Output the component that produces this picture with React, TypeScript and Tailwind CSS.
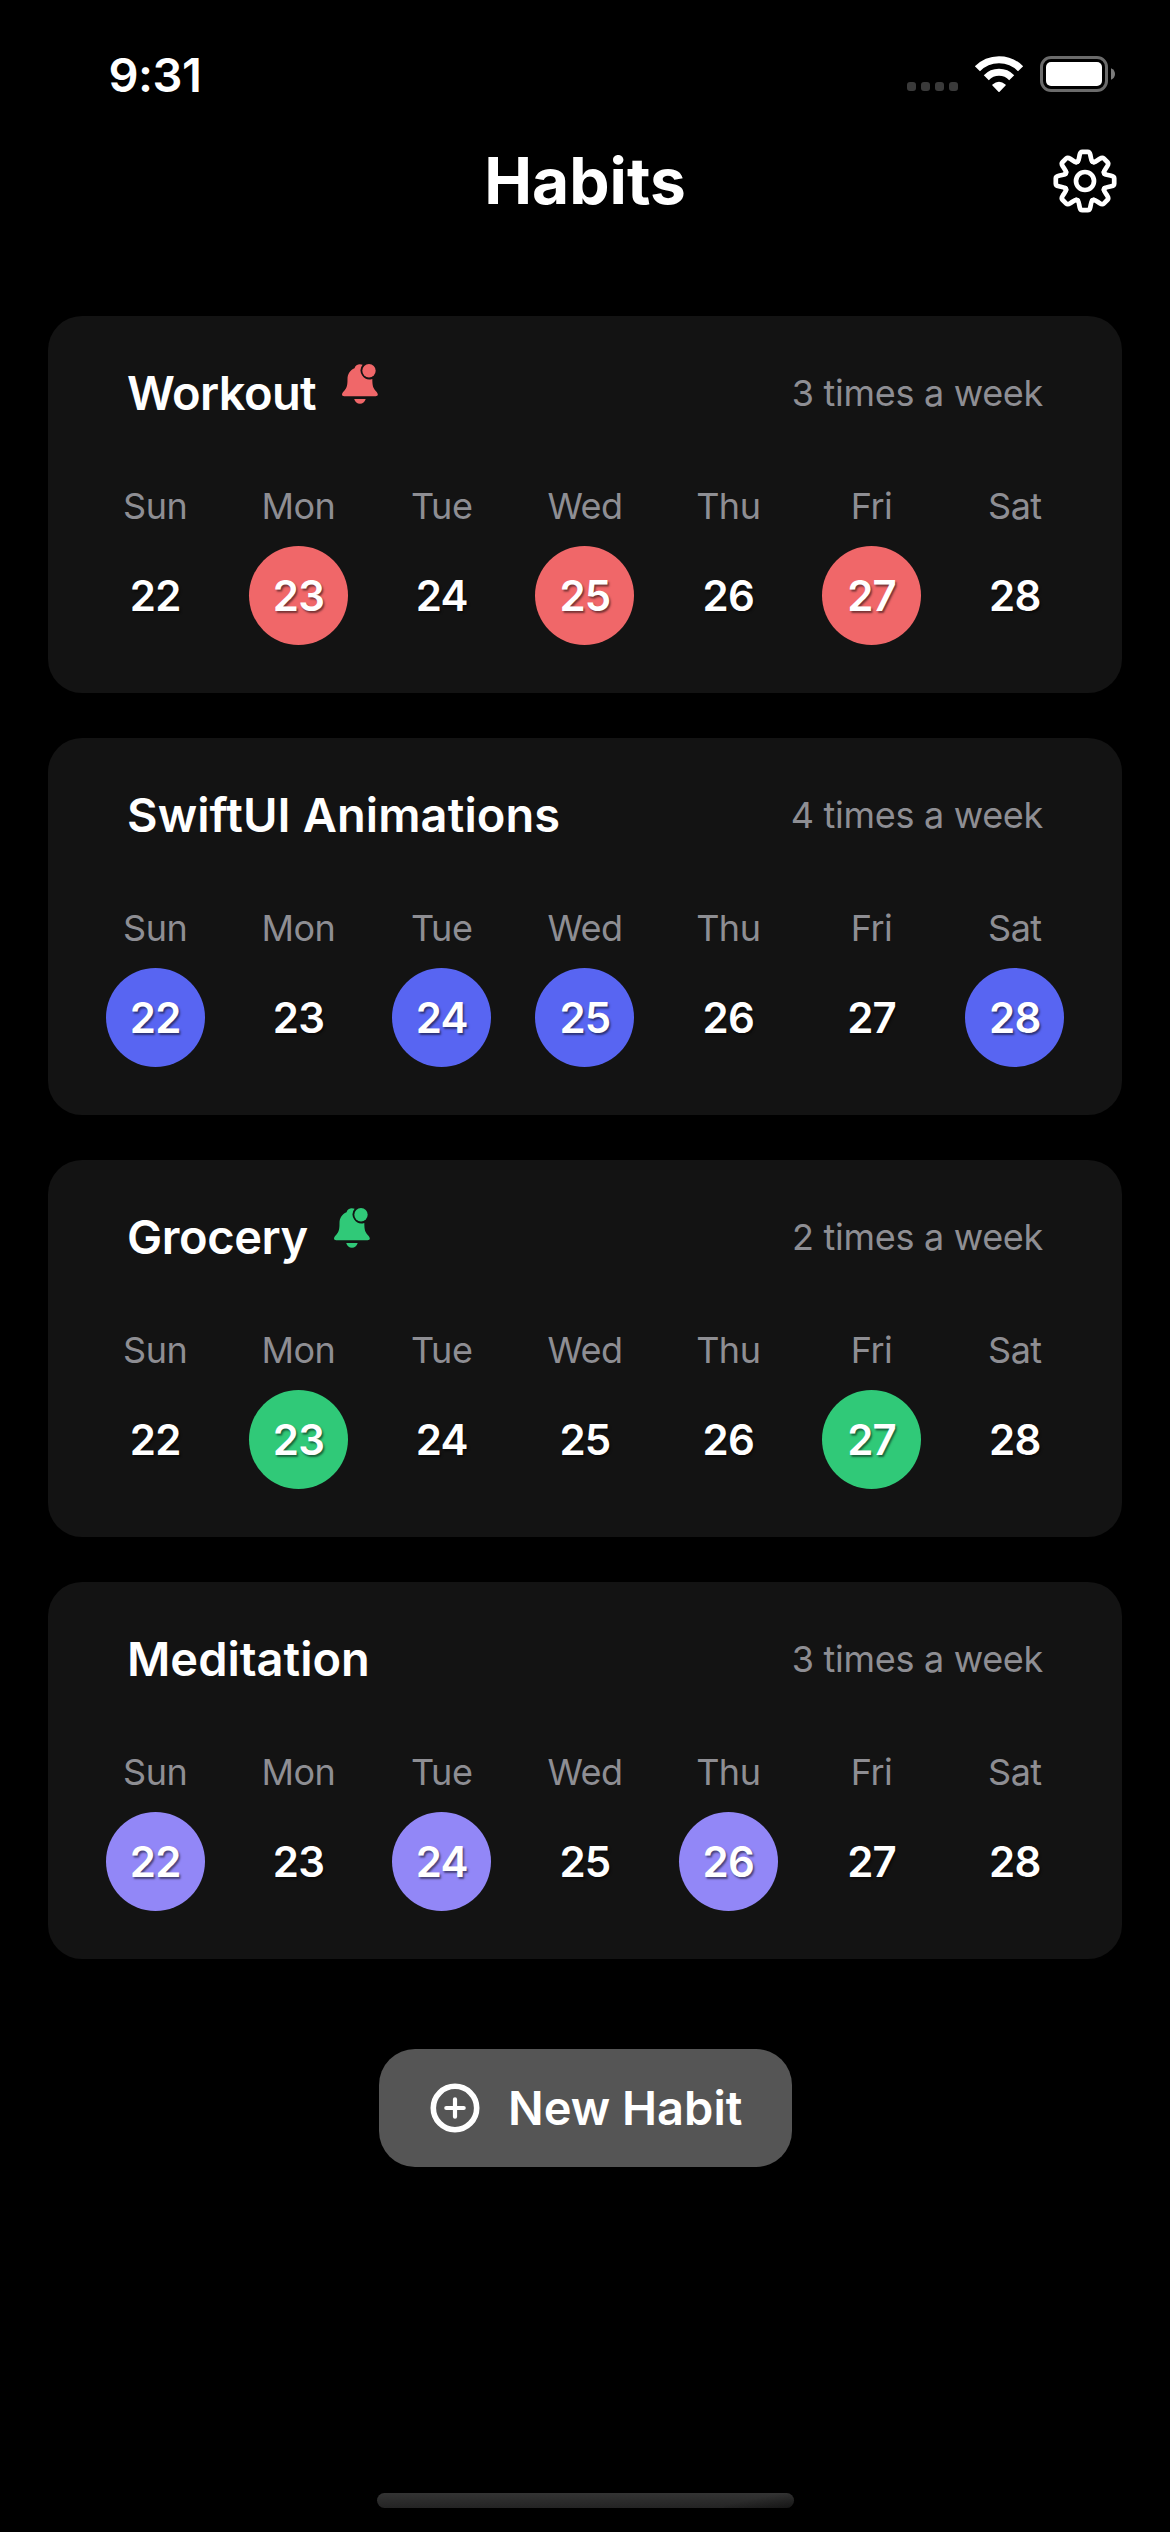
type Habit = {
  name: string;
  tracking: string;
  times: number;
  reminder: boolean;
  fill: string;
  text: string;
  active: number[];
};

const DAYS = [
  { label: "Sun", date: 22 },
  { label: "Mon", date: 23 },
  { label: "Tue", date: 24 },
  { label: "Wed", date: 25 },
  { label: "Thu", date: 26 },
  { label: "Fri", date: 27 },
  { label: "Sat", date: 28 },
];

const HABITS: Habit[] = [
  { name: "Workout", tracking: "tracking-[-0.6px]", times: 3, reminder: true, fill: "bg-[#f06769]", text: "text-[#f06769]", active: [23, 25, 27] },
  { name: "SwiftUI Animations", tracking: "tracking-[0.1px]", times: 4, reminder: false, fill: "bg-[#5865f2]", text: "text-[#5865f2]", active: [22, 24, 25, 28] },
  { name: "Grocery", tracking: "tracking-[-0.4px]", times: 2, reminder: true, fill: "bg-[#30c978]", text: "text-[#30c978]", active: [23, 27] },
  { name: "Meditation", tracking: "tracking-[0px]", times: 3, reminder: false, fill: "bg-[#9287f7]", text: "text-[#9287f7]", active: [22, 24, 26] },
];

function WifiIcon() {
  return (
    <svg width="50" height="38" viewBox="-25 -35 50 38" fill="none" stroke="white" className="mr-[16px]">
      <path d="M-21.6 -21.2A30.3 30.3 0 0 1 21.6 -21.2" strokeWidth="7.2" />
      <path d="M-12.7 -12.3A17.7 17.7 0 0 1 12.7 -12.3" strokeWidth="7" />
      <path d="M0 1.2L-6 -5Q0 -9.8 6 -5Z" fill="white" strokeWidth="1.6" strokeLinejoin="round" />
    </svg>
  );
}

function BatteryIcon() {
  return (
    <svg width="76" height="36" viewBox="0 0 76 36" fill="none">
      <rect x="1.5" y="1.5" width="65" height="33" rx="9.5" stroke="#6b6b6b" strokeWidth="3" />
      <rect x="6" y="6" width="56" height="24" rx="5" fill="white" />
      <path d="M71 12.2Q75 14 75 18T71 23.8Z" fill="#7b7b7b" />
    </svg>
  );
}

const GEAR_TOOTH =
  "M-8.7 -18.9L-7.2 -19.5C-6 -20.8 -5.9 -23.5 -5.3 -26.2Q-4.7 -29.2 -2.7 -29.2H2.7Q4.7 -29.2 5.3 -26.2C5.9 -23.5 6 -20.8 7.2 -19.5L8.7 -18.9";

function GearIcon() {
  return (
    <svg width="64" height="64" viewBox="-32 -32 64 64" fill="none" stroke="white" strokeWidth="4.7" strokeLinecap="round" strokeLinejoin="round">
      {[0, 45, 90, 135, 180, 225, 270, 315].map((angle) => (
        <path key={angle} d={GEAR_TOOTH} transform={`rotate(${angle})`} />
      ))}
      <circle r="9" />
    </svg>
  );
}

function BellBadgeIcon({ className }: { className: string }) {
  return (
    <svg width="36" height="40" viewBox="0 0 36 40" fill="currentColor" className={className}>
      <path d="M20.6 0.8Q17.5 -0.7 14.5 1.2Q13 2.3 12.5 4.2C8 6 5.5 10 5.5 15.2C5.500 21 5 23.5 2.3 26.7C0.9 28.3 0 29.2 0 30.6C0 31.8 0.9 32.3 2.2 32.3H33.6C34.9 32.3 35.8 31.8 35.8 30.6C35.8 29.2 34.9 28.3 33.5 26.7C30.8 23.5 30.4 21 30.3 15A9 9 0 0 1 20.6 0.8Z" />
      <circle cx="27" cy="6.7" r="6.7" />
      <path d="M12.2 35H23.7C22.8 38.2 20.7 39.8 17.95 39.8S13.1 38.2 12.2 35Z" />
    </svg>
  );
}

function PlusCircleIcon() {
  return (
    <svg width="50" height="50" viewBox="-25 -25 50 50" fill="none" stroke="white" strokeLinecap="round">
      <circle r="21.7" strokeWidth="5.6" />
      <path d="M-8.7 0H8.7M0 -8.7V8.7" strokeWidth="4.2" />
    </svg>
  );
}

function HabitCard({ habit }: { habit: Habit }) {
  return (
    <section className="h-[377px] rounded-[34px] bg-[#131313] px-[35.5px]">
      <header className="flex h-[154px] items-center px-[43.5px]">
        <h2 className={`mb-[2px] text-[47px] leading-none font-semibold text-white ${habit.tracking}`}>{habit.name}</h2>
        {habit.reminder && <BellBadgeIcon className={`mb-[18px] ml-[26px] ${habit.text}`} />}
        <p className="ml-auto text-[36px] leading-none tracking-[-0.3px] text-[#8e8e93]">{habit.times} times a week</p>
      </header>
      <div className="grid grid-cols-7">
        {DAYS.map((day) => (
          <div key={day.date} className="flex flex-col items-center">
            <span className="text-[36px] leading-[73px] tracking-[-0.5px] text-[#8e8e93]">{day.label}</span>
            <span
              className={`mt-[3px] flex size-[99px] items-center justify-center rounded-full text-[42px] leading-none font-semibold tracking-[-0.8px] text-white [text-shadow:1.5px_1.5px_2px_rgba(0,0,0,0.5)] ${habit.active.includes(day.date) ? habit.fill : ""}`}
            >
              {day.date}
            </span>
          </div>
        ))}
      </div>
    </section>
  );
}

export default function App() {
  return (
    <div className="flex h-[2532px] w-[1170px] flex-col bg-black font-['Inter',sans-serif] text-white">
      <div className="flex h-[148px] items-center pr-[54px] pl-[108.5px]">
        <span className="text-[47px] leading-none font-semibold tracking-[-0.5px]">9:31</span>
        <div className="ml-auto flex items-center">
          <div className="mt-[25px] mr-[16px] flex gap-[5px]">
            {[0, 1, 2, 3].map((i) => (
              <span key={i} className="size-[9px] rounded-[3px] bg-[#3a3a3a]" />
            ))}
          </div>
          <WifiIcon />
          <BatteryIcon />
        </div>
      </div>

      <div className="grid h-[66px] grid-cols-[1fr_auto_1fr] items-center px-[53px]">
        <h1 className="col-start-2 text-[64px] leading-none font-bold">Habits</h1>
        <button className="justify-self-end">
          <GearIcon />
        </button>
      </div>

      <main className="mt-[102px] flex flex-col gap-[45px] px-[48px]">
        {HABITS.map((habit) => (
          <HabitCard key={habit.name} habit={habit} />
        ))}
      </main>

      <button className="mt-[90px] flex h-[118px] w-[413px] items-center gap-[28px] self-center rounded-[36px] bg-[#555555] pl-[51.5px]">
        <PlusCircleIcon />
        <span className="mb-[2px] text-[47px] leading-none font-semibold">New Habit</span>
      </button>

      <div className="mt-auto mb-[24px] flex h-[15px] w-[417px] justify-end self-center overflow-hidden rounded-full bg-linear-to-b from-[#343434] to-[#242424]">
        <span className="w-[70px] bg-linear-to-br from-transparent from-40% to-black/40" />
      </div>
    </div>
  );
}
